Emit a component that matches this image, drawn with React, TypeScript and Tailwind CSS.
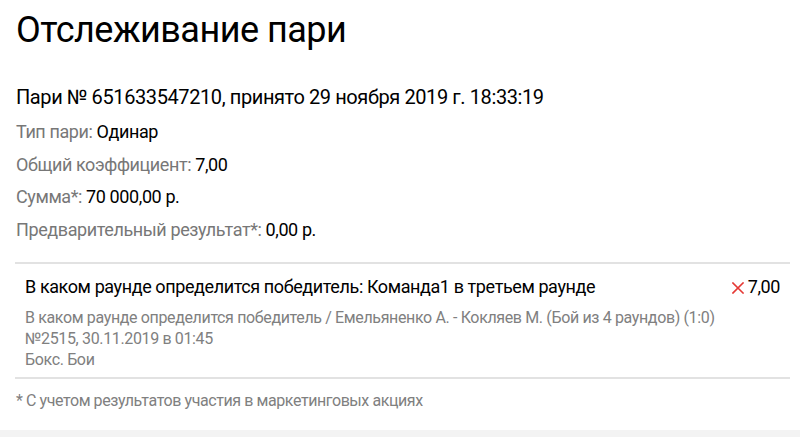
export default function App() {
  const font = { fontFamily: "Roboto, 'Liberation Sans', sans-serif" };
  return (
    <div className="w-[800px] h-[437px] bg-white flex flex-col overflow-hidden" style={font}>
      <div className="flex-1 flex flex-col px-4">
        <h1 className="text-[36px] leading-[42px] text-black pt-[9px] tracking-[-0.5px]">Отслеживание пари</h1>
        <div className="mt-[34px] text-[20px] leading-[24px] text-black tracking-[-0.4px]">
          Пари № 651633547210, принято 29 ноября 2019 г. 18:33:19
        </div>
        <div className="mt-[7px] flex flex-col text-[18px] leading-[32.6px] tracking-[-0.4px]">
          <div><span className="text-[#777]">Тип пари: </span><span className="text-black">Одинар</span></div>
          <div><span className="text-[#777]">Общий коэффициент: </span><span className="text-black">7,00</span></div>
          <div><span className="text-[#777]">Сумма*: </span><span className="text-black">70 000,00 р.</span></div>
          <div><span className="text-[#777]">Предварительный результат*: </span><span className="text-black">0,00 р.</span></div>
        </div>
        <div className="mt-[16px] ml-[-1px] mr-[-6px] border-t-2 border-b-2 border-[#e2e2e2] pt-[11px] pb-[7px] pl-[10px] pr-[10px]">
          <div className="flex items-center justify-between text-[18px] leading-[24px] text-black tracking-[-0.4px]">
            <span>В каком раунде определится победитель: Команда1 в третьем раунде</span>
            <span className="flex items-center gap-[4px]">
              <svg width="12" height="12" viewBox="0 0 12 12" className="mt-[1px]">
                <path d="M1 1 L11 11 M11 1 L1 11" stroke="#e53935" strokeWidth="1.6" strokeLinecap="square" />
              </svg>
              <span>7,00</span>
            </span>
          </div>
          <div className="mt-[8px] text-[16px] leading-[21px] text-[#808080] tracking-[-0.36px]">
            <div>В каком раунде определится победитель / Емельяненко А. - Кокляев М. (Бой из 4 раундов) (1:0)</div>
            <div>№2515, 30.11.2019 в 01:45</div>
            <div>Бокс. Бои</div>
          </div>
        </div>
        <div className="mt-[12px] text-[16px] leading-[20px] text-[#808080] tracking-[-0.42px]">
          * С учетом результатов участия в маркетинговых акциях
        </div>
      </div>
      <div className="h-[7px] bg-[#f3f3f3]" />
    </div>
  );
}
